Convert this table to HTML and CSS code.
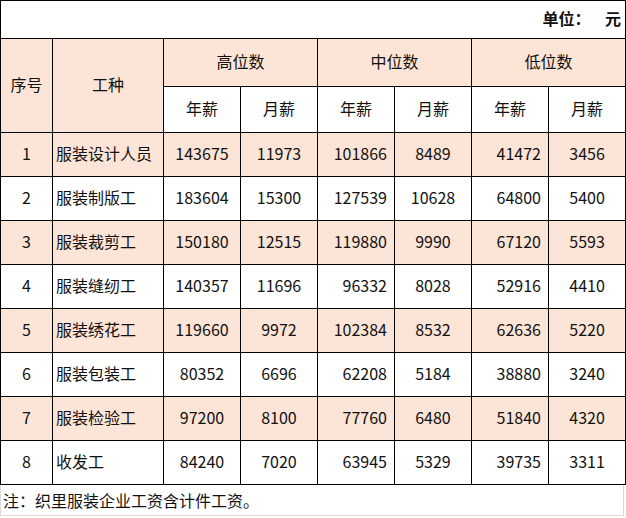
FILE: index.html
```html
<!DOCTYPE html>
<html lang="zh">
<head>
<meta charset="utf-8">
<title>工资表</title>
<link rel="stylesheet" href="styles.css">
</head>
<body>
<table class="wage">
  <colgroup>
    <col class="c-no"><col class="c-job">
    <col class="c-n"><col class="c-n"><col class="c-n"><col class="c-n"><col class="c-n"><col class="c-n">
  </colgroup>
  <tr class="r-unit"><td colspan="8" class="unit">单位：&nbsp;&nbsp;&nbsp;&nbsp;元</td></tr>
  <tr class="r-h1 peach">
    <th rowspan="2">序号</th><th rowspan="2">工种</th>
    <th colspan="2">高位数</th><th colspan="2">中位数</th><th colspan="2">低位数</th>
  </tr>
  <tr class="r-h2">
    <th>年薪</th><th>月薪</th><th>年薪</th><th>月薪</th><th>年薪</th><th>月薪</th>
  </tr>
  <tr class="peach"><td>1</td><td class="job">服装设计人员</td><td>143675</td><td>11973</td><td class="r">101866</td><td>8489</td><td class="r">41472</td><td>3456</td></tr>
  <tr><td>2</td><td class="job">服装制版工</td><td>183604</td><td>15300</td><td class="r">127539</td><td>10628</td><td class="r">64800</td><td>5400</td></tr>
  <tr class="peach"><td>3</td><td class="job">服装裁剪工</td><td>150180</td><td>12515</td><td class="r">119880</td><td>9990</td><td class="r">67120</td><td>5593</td></tr>
  <tr><td>4</td><td class="job">服装缝纫工</td><td>140357</td><td>11696</td><td class="r">96332</td><td>8028</td><td class="r">52916</td><td>4410</td></tr>
  <tr class="peach"><td>5</td><td class="job">服装绣花工</td><td>119660</td><td>9972</td><td class="r">102384</td><td>8532</td><td class="r">62636</td><td>5220</td></tr>
  <tr><td>6</td><td class="job">服装包装工</td><td>80352</td><td>6696</td><td class="r">62208</td><td>5184</td><td class="r">38880</td><td>3240</td></tr>
  <tr class="peach"><td>7</td><td class="job">服装检验工</td><td>97200</td><td>8100</td><td class="r">77760</td><td>6480</td><td class="r">51840</td><td>4320</td></tr>
  <tr><td>8</td><td class="job">收发工</td><td>84240</td><td>7020</td><td class="r">63945</td><td>5329</td><td class="r">39735</td><td>3311</td></tr>
</table>
<div class="note">注：织里服装企业工资含计件工资。</div>
</body>
</html>
```
FILE: styles.css
```css
html, body {
  margin: 0;
  padding: 0;
  background: #fff;
}
body {
  font-family: "Noto Sans CJK SC", "Noto Sans", sans-serif;
  font-size: 16px;
  color: #111;
}
.wage {
  border-collapse: collapse;
  table-layout: fixed;
  width: 626px;
}
.c-no { width: 52px; }
.c-job { width: 111px; }
.c-n { width: 77px; }
.wage td, .wage th {
  border: 1px solid #000;
  padding: 0 0 3px 0;
  text-align: center;
  vertical-align: middle;
  font-weight: normal;
  line-height: 20px;
  white-space: nowrap;
  overflow: hidden;
}
.wage tr { height: 44px; }
.wage .r-unit { height: 38px; }
.wage .r-h1 { height: 48px; }
.wage .r-h2 { height: 46px; }
.peach td, .peach th, .r-h2 th[rowspan] { background: #fce4d6; }
.r-h1 th[rowspan] { background: #fce4d6; }
.wage td.unit {
  text-align: right;
  font-weight: bold;
  padding-right: 4px;
  padding-bottom: 4px;
}
.wage td.job {
  text-align: left;
  padding-left: 3px;
}
.wage td.r {
  text-align: right;
  padding-right: 7px;
}
.note {
  width: 624px;
  height: 31px;
  line-height: 31px;
  padding-left: 2px;
  box-sizing: border-box;
  border-left: 1px solid #d9d9d9;
  border-right: 1px solid #d9d9d9;
  border-bottom: 1px solid #d9d9d9;
}
```
